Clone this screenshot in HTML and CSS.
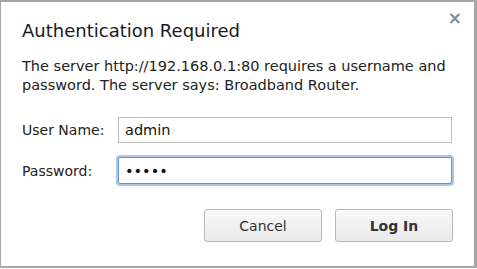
FILE: index.html
```html
<!DOCTYPE html>
<html lang="en">
<head>
    <meta charset="UTF-8">
    <title>Authentication Required</title>
    <link rel="stylesheet" href="styles.css">
</head>
<body>
    <div class="dialog">
        <span class="close">&#x00D7;</span>
        <h1 class="title">Authentication Required</h1>
        <p class="message">The server http://192.168.0.1:80 requires a username and password. The server says: Broadband Router.</p>
        <div class="field">
            <label class="label" for="user">User Name:</label>
            <input class="input" id="user" type="text" value="admin">
        </div>
        <div class="field">
            <label class="label" for="pass">Password:</label>
            <input class="input focused" id="pass" type="password" value="admin">
        </div>
        <div class="buttons">
            <button class="btn">Cancel</button>
            <button class="btn default">Log In</button>
        </div>
    </div>
</body>
</html>
```

FILE: styles.css
```css
body {
    margin: 0;
    background: #ffffff;
    font-family: "DejaVu Sans", sans-serif;
    color: #222222;
}

.dialog {
    position: relative;
    box-sizing: border-box;
    width: 477px;
    height: 268px;
    border-style: solid;
    border-color: #a7a7a7;
    border-width: 2px 3px 2px 1px;
    padding: 17px 21px 0 21px;
}

.close {
    position: absolute;
    top: 6px;
    right: 12px;
    font-size: 17px;
    font-weight: bold;
    color: #8a8a8a;
}

.title {
    margin: 0;
    font-size: 18px;
    font-weight: normal;
    line-height: 24px;
    color: #1a1a1a;
}

.message {
    margin: 14px 0 0 0;
    font-size: 14.5px;
    line-height: 19px;
    color: #222222;
}

.field {
    display: flex;
    align-items: center;
    margin-top: 22px;
}

.field + .field {
    margin-top: 14px;
}

.label {
    width: 96px;
    font-size: 14px;
}

.input {
    box-sizing: border-box;
    width: 334px;
    height: 26px;
    border: 1px solid #bdbdbd;
    padding: 0 6px;
    font-family: "DejaVu Sans", sans-serif;
    font-size: 14.5px;
    color: #111111;
    outline: none;
}

.input.focused {
    height: 27px;
    border: 1px solid #5f95d0;
    box-shadow: 0 0 0 2px #a9c7ea;
    border-radius: 2px;
}

.buttons {
    display: flex;
    justify-content: flex-end;
    gap: 13px;
    margin-top: 25px;
}

.btn {
    box-sizing: border-box;
    width: 118px;
    height: 33px;
    border: 1px solid #b9b9b9;
    border-radius: 3px;
    background: linear-gradient(#f9f9f9, #e9e9e9);
    font-family: "DejaVu Sans", sans-serif;
    font-size: 14px;
    color: #333333;
}

.btn.default {
    font-weight: bold;
}
```
